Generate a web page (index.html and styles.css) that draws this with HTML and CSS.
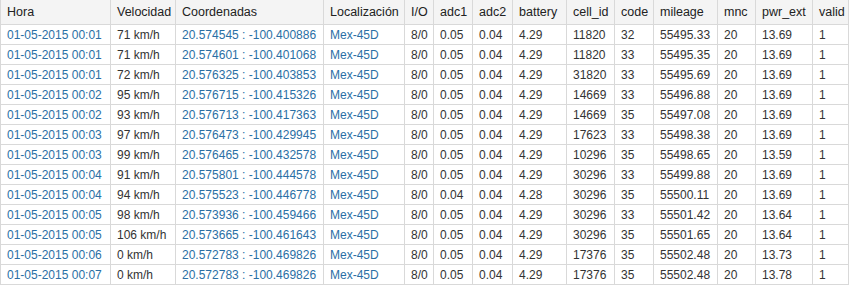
FILE: index.html
```html
<!DOCTYPE html>
<html>
<head>
<meta charset="utf-8">
<link rel="stylesheet" href="styles.css">
</head>
<body>
<table class="grid">
<colgroup>
<col class="c-hora"><col class="c-vel"><col class="c-coord"><col class="c-loc"><col class="c-io"><col class="c-adc1"><col class="c-adc2"><col class="c-bat"><col class="c-cell"><col class="c-code"><col class="c-mil"><col class="c-mnc"><col class="c-pwr"><col class="c-valid">
</colgroup>
<thead>
<tr><th>Hora</th><th>Velocidad</th><th>Coordenadas</th><th>Localización</th><th>I/O</th><th>adc1</th><th>adc2</th><th>battery</th><th>cell_id</th><th>code</th><th>mileage</th><th>mnc</th><th>pwr_ext</th><th>valid</th></tr>
</thead>
<tbody>
<tr><td class="lnk">01-05-2015 00:01</td><td>71 km/h</td><td class="lnk">20.574545 : -100.400886</td><td class="lnk">Mex-45D</td><td>8/0</td><td>0.05</td><td>0.04</td><td>4.29</td><td>11820</td><td>32</td><td>55495.33</td><td>20</td><td>13.69</td><td>1</td></tr>
<tr><td class="lnk">01-05-2015 00:01</td><td>71 km/h</td><td class="lnk">20.574601 : -100.401068</td><td class="lnk">Mex-45D</td><td>8/0</td><td>0.05</td><td>0.04</td><td>4.29</td><td>11820</td><td>33</td><td>55495.35</td><td>20</td><td>13.69</td><td>1</td></tr>
<tr><td class="lnk">01-05-2015 00:01</td><td>72 km/h</td><td class="lnk">20.576325 : -100.403853</td><td class="lnk">Mex-45D</td><td>8/0</td><td>0.05</td><td>0.04</td><td>4.29</td><td>31820</td><td>33</td><td>55495.69</td><td>20</td><td>13.69</td><td>1</td></tr>
<tr><td class="lnk">01-05-2015 00:02</td><td>95 km/h</td><td class="lnk">20.576715 : -100.415326</td><td class="lnk">Mex-45D</td><td>8/0</td><td>0.05</td><td>0.04</td><td>4.29</td><td>14669</td><td>33</td><td>55496.88</td><td>20</td><td>13.69</td><td>1</td></tr>
<tr><td class="lnk">01-05-2015 00:02</td><td>93 km/h</td><td class="lnk">20.576713 : -100.417363</td><td class="lnk">Mex-45D</td><td>8/0</td><td>0.05</td><td>0.04</td><td>4.29</td><td>14669</td><td>35</td><td>55497.08</td><td>20</td><td>13.69</td><td>1</td></tr>
<tr><td class="lnk">01-05-2015 00:03</td><td>97 km/h</td><td class="lnk">20.576473 : -100.429945</td><td class="lnk">Mex-45D</td><td>8/0</td><td>0.05</td><td>0.04</td><td>4.29</td><td>17623</td><td>33</td><td>55498.38</td><td>20</td><td>13.69</td><td>1</td></tr>
<tr><td class="lnk">01-05-2015 00:03</td><td>99 km/h</td><td class="lnk">20.576465 : -100.432578</td><td class="lnk">Mex-45D</td><td>8/0</td><td>0.05</td><td>0.04</td><td>4.29</td><td>10296</td><td>35</td><td>55498.65</td><td>20</td><td>13.59</td><td>1</td></tr>
<tr><td class="lnk">01-05-2015 00:04</td><td>91 km/h</td><td class="lnk">20.575801 : -100.444578</td><td class="lnk">Mex-45D</td><td>8/0</td><td>0.05</td><td>0.04</td><td>4.29</td><td>30296</td><td>33</td><td>55499.88</td><td>20</td><td>13.69</td><td>1</td></tr>
<tr><td class="lnk">01-05-2015 00:04</td><td>94 km/h</td><td class="lnk">20.575523 : -100.446778</td><td class="lnk">Mex-45D</td><td>8/0</td><td>0.04</td><td>0.04</td><td>4.28</td><td>30296</td><td>35</td><td>55500.11</td><td>20</td><td>13.69</td><td>1</td></tr>
<tr><td class="lnk">01-05-2015 00:05</td><td>98 km/h</td><td class="lnk">20.573936 : -100.459466</td><td class="lnk">Mex-45D</td><td>8/0</td><td>0.05</td><td>0.04</td><td>4.29</td><td>30296</td><td>33</td><td>55501.42</td><td>20</td><td>13.64</td><td>1</td></tr>
<tr><td class="lnk">01-05-2015 00:05</td><td>106 km/h</td><td class="lnk">20.573665 : -100.461643</td><td class="lnk">Mex-45D</td><td>8/0</td><td>0.05</td><td>0.04</td><td>4.29</td><td>30296</td><td>35</td><td>55501.65</td><td>20</td><td>13.64</td><td>1</td></tr>
<tr><td class="lnk">01-05-2015 00:06</td><td>0 km/h</td><td class="lnk">20.572783 : -100.469826</td><td class="lnk">Mex-45D</td><td>8/0</td><td>0.05</td><td>0.04</td><td>4.29</td><td>17376</td><td>35</td><td>55502.48</td><td>20</td><td>13.73</td><td>1</td></tr>
<tr><td class="lnk">01-05-2015 00:07</td><td>0 km/h</td><td class="lnk">20.572783 : -100.469826</td><td class="lnk">Mex-45D</td><td>8/0</td><td>0.05</td><td>0.04</td><td>4.29</td><td>17376</td><td>35</td><td>55502.48</td><td>20</td><td>13.78</td><td>1</td></tr>
</tbody>
</table>
</body>
</html>
```
FILE: styles.css
```css
html, body {
  margin: 0;
  padding: 0;
  background: #ffffff;
}
.grid {
  border-collapse: collapse;
  table-layout: fixed;
  width: 849px;
  font-family: "Liberation Sans", Arial, sans-serif;
  font-size: 12px;
  color: #333333;
}
.grid th,
.grid td {
  border: 1px solid #d9d9d9;
  padding: 0 6px;
  text-align: left;
  white-space: nowrap;
  overflow: hidden;
}
.grid th {
  height: 24px;
  background: #f4f4f4;
  font-weight: normal;
  color: #222222;
  font-size: 12.5px;
  border-top: 0;
}
.grid td {
  height: 19px;
}
.grid .lnk {
  color: #2a6fa5;
}
.c-hora { width: 110px; }
.c-vel { width: 65px; }
.c-coord { width: 148px; }
.c-loc { width: 81px; }
.c-io { width: 29px; }
.c-adc1 { width: 39px; }
.c-adc2 { width: 40px; }
.c-bat { width: 54px; }
.c-cell { width: 48px; }
.c-code { width: 39px; }
.c-mil { width: 64px; }
.c-mnc { width: 38px; }
.c-pwr { width: 57px; }
.c-valid { width: 36px; }
```
